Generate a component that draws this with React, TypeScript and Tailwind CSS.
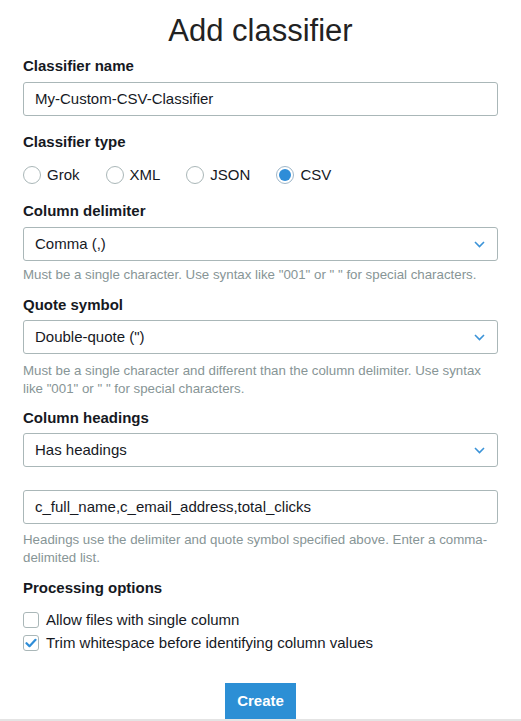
const font = { fontFamily: '"Liberation Sans", Arial, Helvetica, sans-serif' };

function Label({ children, className = "" }: { children: React.ReactNode; className?: string }) {
  return <div className={`text-[15px] leading-[18px] font-bold text-[#16191f] ${className}`}>{children}</div>;
}

function Help({ children, className = "" }: { children: React.ReactNode; className?: string }) {
  return <div className={`text-[13.3px] leading-[18px] text-[#879596] ${className}`}>{children}</div>;
}

function TextBox({ value, className = "" }: { value: string; className?: string }) {
  return (
    <div
      className={`h-[34px] flex items-center px-[11px] border border-[#aab7b8] rounded-[3px] text-[15px] text-[#16191f] ${className}`}
    >
      {value}
    </div>
  );
}

function SelectBox({ value, className = "" }: { value: string; className?: string }) {
  return (
    <div
      className={`h-[34px] flex items-center justify-between pl-[11px] pr-[12px] border border-[#aab7b8] rounded-[3px] text-[15px] text-[#16191f] ${className}`}
    >
      <span>{value}</span>
      <svg width="11" height="7" viewBox="0 0 11 7" fill="none">
        <path d="M1 1l4.5 4.5L10 1" stroke="#3b93d8" strokeWidth="1.6" />
      </svg>
    </div>
  );
}

function Radio({ label, checked }: { label: string; checked?: boolean }) {
  return (
    <div className="flex items-center gap-[6px] h-[18px]">
      <div
        className={`w-[18px] h-[18px] rounded-full border flex items-center justify-center bg-white ${
          checked ? "border-[#9fb7c9]" : "border-[#aab7b8]"
        }`}
      >
        {checked && <div className="w-[12px] h-[12px] rounded-full bg-[#2e8dd8]" />}
      </div>
      <span className="text-[15px] leading-[18px] text-[#16191f]">{label}</span>
    </div>
  );
}

function Check({ label, checked }: { label: string; checked?: boolean }) {
  return (
    <div className="flex items-center gap-[7px] h-[18px]">
      <div className="w-[16px] h-[16px] rounded-[3px] border border-[#aab7b8] bg-white flex items-center justify-center">
        {checked && (
          <svg width="12" height="10" viewBox="0 0 12 10" fill="none">
            <path d="M1.5 5.2l3 3L10.5 1.8" stroke="#2e8dd8" strokeWidth="2.2" strokeLinecap="round" strokeLinejoin="round" />
          </svg>
        )}
      </div>
      <span className="text-[15px] leading-[18px] text-[#16191f]">{label}</span>
    </div>
  );
}

export default function App() {
  return (
    <div className="w-[521px] h-[721px] bg-white flex flex-col overflow-hidden" style={font}>
      <div className="px-[23px] flex flex-col">
        <h1 className="pt-[13px] text-[31px] leading-[36px] text-center text-[#222]">Add classifier</h1>

        <Label className="mt-[8px]">Classifier name</Label>
        <TextBox className="mt-[7px]" value="My-Custom-CSV-Classifier" />

        <Label className="mt-[17px]">Classifier type</Label>
        <div className="mt-[15px] flex items-center gap-[26px]">
          <Radio label="Grok" />
          <Radio label="XML" />
          <Radio label="JSON" />
          <Radio label="CSV" checked />
        </div>

        <Label className="mt-[18px]">Column delimiter</Label>
        <SelectBox className="mt-[7px]" value="Comma (,)" />
        <Help className="mt-[5px]">Must be a single character. Use syntax like "001" or " " for special characters.</Help>

        <Label className="mt-[12px]">Quote symbol</Label>
        <SelectBox className="mt-[6px]" value={'Double-quote (")'} />
        <Help className="mt-[8px]">
          Must be a single character and different than the column delimiter. Use syntax like "001" or " " for special
          characters.
        </Help>

        <Label className="mt-[11px]">Column headings</Label>
        <SelectBox className="mt-[6px]" value="Has headings" />
        <TextBox className="mt-[23px]" value="c_full_name,c_email_address,total_clicks" />
        <Help className="mt-[7px]">
          Headings use the delimiter and quote symbol specified above. Enter a comma-delimited list.
        </Help>

        <Label className="mt-[12px]">Processing options</Label>
        <div className="mt-[14px] flex flex-col gap-[5px]">
          <Check label="Allow files with single column" />
          <Check label="Trim whitespace before identifying column values" checked />
        </div>

        <div className="mt-[31px] flex justify-center">
          <button className="h-[36px] px-[12px] bg-[#2c8fd5] text-white text-[15px] font-bold">Create</button>
        </div>
      </div>
      <div className="h-[2px] bg-[#e4e4e4] w-full" />
    </div>
  );
}
